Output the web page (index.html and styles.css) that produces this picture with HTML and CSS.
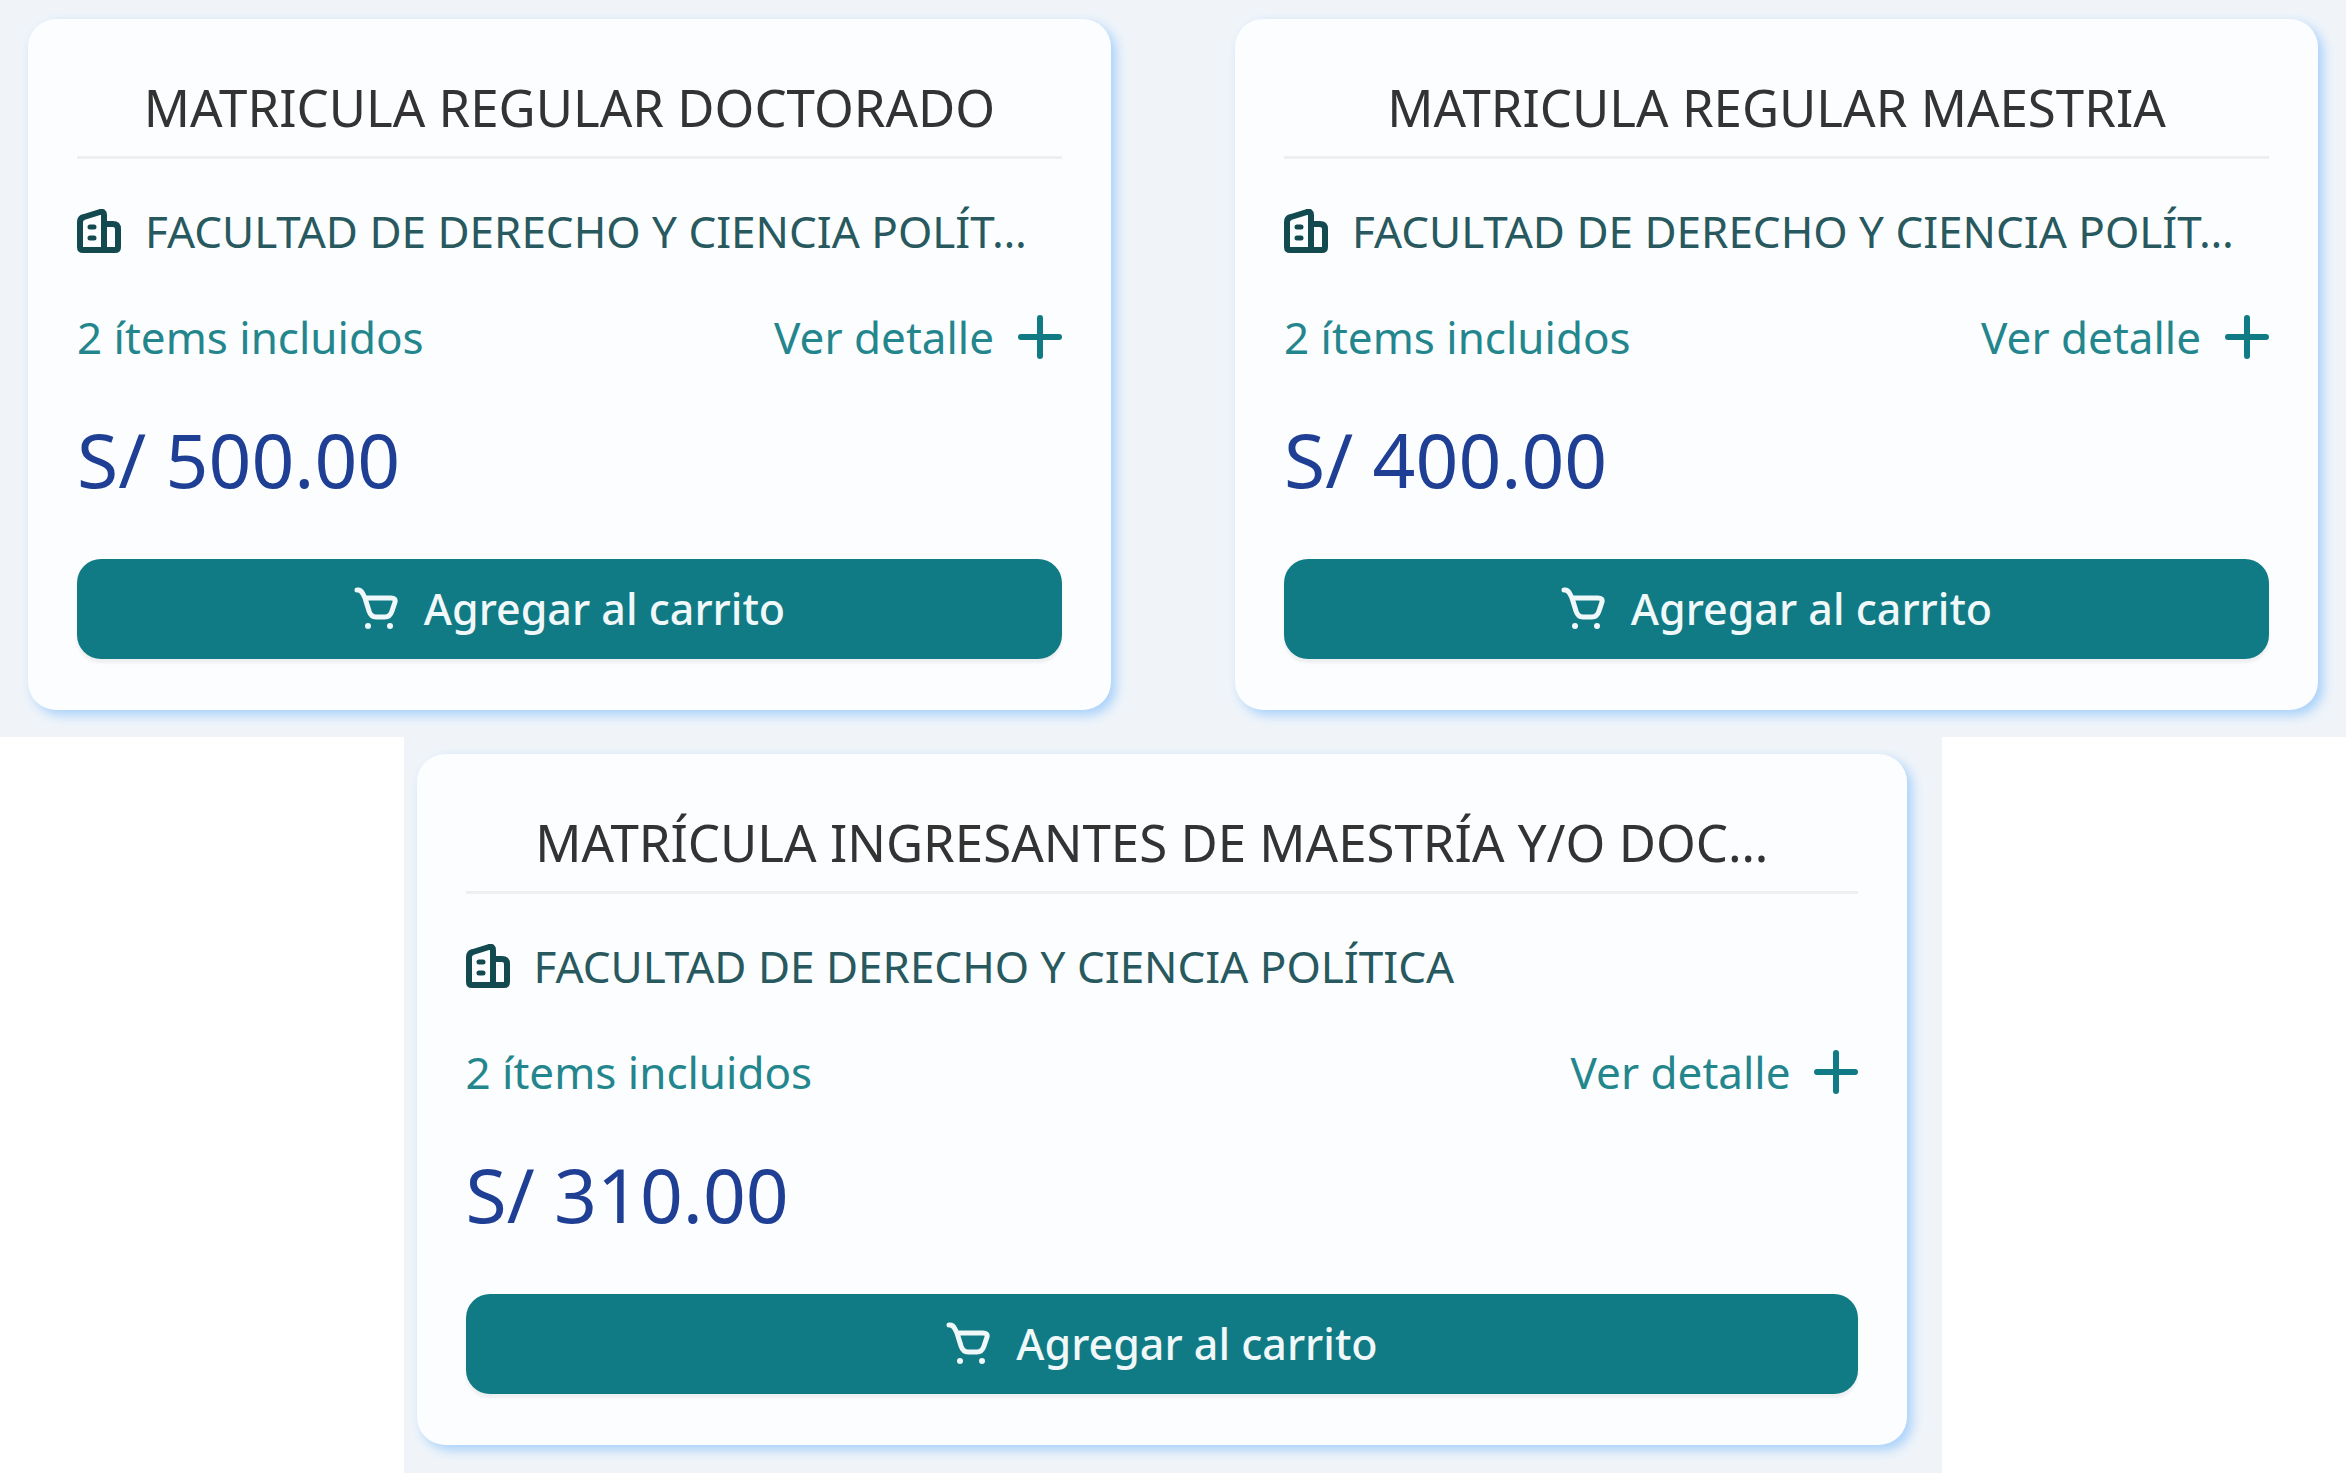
FILE: index.html
```
<!DOCTYPE html>
<html lang="es">
<head>
    <meta charset="UTF-8">
    <meta name="viewport" content="width=device-width, initial-scale=1.0">
    <title>Matrículas</title>
    <link rel="stylesheet" href="styles.css">
</head>
<body>
    <!-- iconos compartidos por las tarjetas -->
    <svg class="sprite" aria-hidden="true">
        <symbol id="icon-building" viewBox="0 0 44 44">
            <path d="M27 41V6q0-4-4-3L7 8q-4 1-4 5v25q0 3 3 3h32q3 0 3-3V20q0-5-5-5h-9" />
            <path d="M13 18h4M13 29h4" stroke-width="5" />
        </symbol>
        <symbol id="icon-plus" viewBox="0 0 44 44">
            <path d="M22 3v38M3 22h38" />
        </symbol>
        <symbol id="icon-cart" viewBox="0 0 44 48">
            <path d="M3 5h1q3 0 5 4l2 4h26q5 0 4 4l-3 9q-2 6-7 6H22q-5 0-7-6L11 13" />
            <circle cx="14" cy="41" r="3" fill="currentColor" stroke="none" />
            <circle cx="36" cy="41" r="3" fill="currentColor" stroke="none" />
        </symbol>
    </svg>

    <section class="panel panel-double">
        <article class="card">
            <h2 class="card-title">MATRICULA REGULAR DOCTORADO</h2>
            <p class="faculty">
                <svg class="icon"><use href="#icon-building" /></svg>
                <span>FACULTAD DE DERECHO Y CIENCIA POLÍT…</span>
            </p>
            <div class="detail">
                <span>2 ítems incluidos</span>
                <button type="button" class="detail-button">Ver detalle
                    <svg class="icon icon-plus"><use href="#icon-plus" /></svg>
                </button>
            </div>
            <p class="price">S/ 500.00</p>
            <button type="button" class="cart-button">
                <svg class="icon icon-cart"><use href="#icon-cart" /></svg>
                Agregar al carrito
            </button>
        </article>

        <article class="card">
            <h2 class="card-title">MATRICULA REGULAR MAESTRIA</h2>
            <p class="faculty">
                <svg class="icon"><use href="#icon-building" /></svg>
                <span>FACULTAD DE DERECHO Y CIENCIA POLÍT…</span>
            </p>
            <div class="detail">
                <span>2 ítems incluidos</span>
                <button type="button" class="detail-button">Ver detalle
                    <svg class="icon icon-plus"><use href="#icon-plus" /></svg>
                </button>
            </div>
            <p class="price">S/ 400.00</p>
            <button type="button" class="cart-button">
                <svg class="icon icon-cart"><use href="#icon-cart" /></svg>
                Agregar al carrito
            </button>
        </article>
    </section>

    <section class="panel panel-single">
        <article class="card">
            <h2 class="card-title">MATRÍCULA INGRESANTES DE MAESTRÍA Y/O DOCTORADO</h2>
            <p class="faculty">
                <svg class="icon"><use href="#icon-building" /></svg>
                <span>FACULTAD DE DERECHO Y CIENCIA POLÍTICA</span>
            </p>
            <div class="detail">
                <span>2 ítems incluidos</span>
                <button type="button" class="detail-button">Ver detalle
                    <svg class="icon icon-plus"><use href="#icon-plus" /></svg>
                </button>
            </div>
            <p class="price">S/ 310.00</p>
            <button type="button" class="cart-button">
                <svg class="icon icon-cart"><use href="#icon-cart" /></svg>
                Agregar al carrito
            </button>
        </article>
    </section>
</body>
</html>
```
FILE: styles.css
```
* {
    box-sizing: border-box;
}

body {
    margin: 0;
    background-color: #fff;
    font-family: "Noto Sans", sans-serif;
    font-size: 44px;
    line-height: 60px;
}

.sprite {
    display: none;
}

.panel {
    display: grid;
    background-color: #f0f4f9;
}

.panel-double {
    grid-template-columns: 1fr 1fr;
    gap: 124px;
    padding: 19px 28px 27px;
}

.panel-single {
    width: 65.6%;
    margin: 0 auto;
    padding: 17px 35px 28px 13px;
}

.card {
    min-width: 0;
    padding: 49px 49px 51px;
    border-radius: 28px;
    background-color: #fbfdff;
    box-shadow: 5px 5px 12px #a6d0fa;
}

.card-title {
    overflow: hidden;
    margin: 0 0 42px;
    padding: 0 5% 10px;
    border-bottom: 3px solid #eeeff1;
    color: #333;
    font-size: 51px;
    font-weight: 400;
    line-height: 78px;
    text-align: center;
    text-overflow: ellipsis;
    white-space: nowrap;
}

.faculty {
    display: flex;
    align-items: center;
    gap: 24px;
    margin: 0 0 46px;
    color: #27595e;
    white-space: nowrap;
}

.icon {
    flex: none;
    width: 44px;
    height: 44px;
    fill: none;
    stroke: currentColor;
    stroke-width: 6;
    stroke-linecap: round;
    stroke-linejoin: round;
}

.faculty .icon {
    color: #134a50;
}

.detail {
    display: flex;
    justify-content: space-between;
    align-items: center;
    color: #23868d;
}

button {
    border: none;
    font: inherit;
    cursor: pointer;
}

.detail-button {
    display: flex;
    align-items: center;
    gap: 24px;
    padding: 0;
    background: none;
    color: inherit;
}

.icon-plus {
    color: #107b84;
}

.price {
    margin: 42px 0 50px;
    color: #1f3f95;
    font-size: 75px;
    line-height: 100px;
}

.cart-button {
    display: flex;
    justify-content: center;
    align-items: center;
    gap: 26px;
    width: 100%;
    padding: 20px;
    border-radius: 24px;
    background-color: #107b84;
    box-shadow: 0 4px 3px #eeeff1;
    color: #f0f8fa;
    font-size: 43px;
    font-weight: 500;
}

.icon-cart {
    height: 48px;
    stroke-width: 5;
}
```
